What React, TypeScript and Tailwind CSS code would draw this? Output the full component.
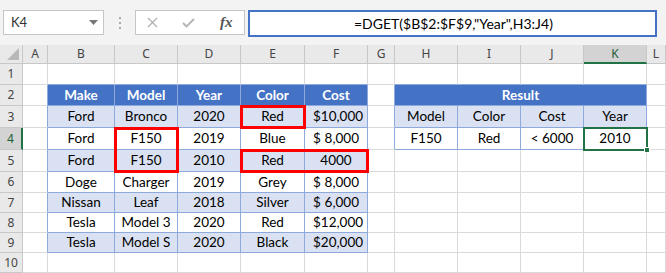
import React from 'react'

const COLS = ['A', 'B', 'C', 'D', 'E', 'F', 'G', 'H', 'I', 'J', 'K', 'L']
const ROWS = [1, 2, 3, 4, 5, 6, 7, 8, 9, 10]

const CARS: string[][] = [
  ['Make', 'Model', 'Year', 'Color', 'Cost'],
  ['Ford', 'Bronco', '2020', 'Red', '$10,000'],
  ['Ford', 'F150', '2019', 'Blue', '$ 8,000'],
  ['Ford', 'F150', '2010', 'Red', '4000'],
  ['Doge', 'Charger', '2019', 'Grey', '$ 8,000'],
  ['Nissan', 'Leaf', '2018', 'Silver', '$ 6,000'],
  ['Tesla', 'Model 3', '2020', 'Red', '$12,000'],
  ['Tesla', 'Model S', '2020', 'Black', '$20,000'],
]

const RESULT: string[][] = [
  ['Model', 'Color', 'Cost', 'Year'],
  ['F150', 'Red', '< 6000', '2010'],
]

const GRID =
  'grid grid-cols-[23px_25px_67px_63px_63px_64px_63px_27px_63px_63px_63px_63px_1fr] grid-rows-[19px_21px_21px_22px_22px_22px_21px_20px_20px_20px_20px]'

// c: 1 = A ... 12 = L
function inCars(r: number, c: number) {
  return r >= 2 && r <= 9 && c >= 2 && c <= 6
}
function inResult(r: number, c: number) {
  return r >= 2 && r <= 4 && c >= 8 && c <= 11
}
function inTable(r: number, c: number) {
  return inCars(r, c) || inResult(r, c)
}

function Cost({ value }: { value: string }) {
  if (!value.startsWith('$')) return <span>{value}</span>
  return (
    <span className="flex w-full justify-between px-[8px]">
      <span>$</span>
      <span>{value.slice(1).trim()}</span>
    </span>
  )
}

function Cell({ r, c }: { r: number; c: number }) {
  const right = inTable(r, c) || inTable(r, c + 1) ? 'border-[#8ea9db]' : 'border-[#dadada]'
  const bottom = inTable(r, c) || inTable(r + 1, c) ? 'border-b-[#8ea9db]' : 'border-b-[#dadada]'
  let bg = 'bg-white'
  let text: React.ReactNode = null
  let weight = ''

  if (inCars(r, c)) {
    const v = CARS[r - 2][c - 2]
    if (r === 2) {
      bg = 'bg-[#4472c4] text-white'
      weight = 'font-bold'
    } else if (r % 2 === 1) {
      bg = 'bg-[#d9e1f2]'
    }
    text = c === 6 && r > 2 ? <Cost value={v} /> : v
  } else if (inResult(r, c)) {
    text = RESULT[r - 3][c - 8]
    if (r === 3) bg = 'bg-[#d9e1f2]'
  }

  return (
    <div className={`flex items-center justify-center border-r border-b ${right} ${bottom} ${bg} ${weight} text-black`}>
      {text}
    </div>
  )
}

function FormulaBar() {
  return (
    <div className="flex h-[45px] items-start bg-[#f3f3f3] pt-[10px] pl-[3px]">
      <div className="flex h-[25px] w-[101px] items-center justify-between border border-[#c6c6c6] bg-white pl-[7px] pr-[5px] text-[13px] text-[#333]">
        <span>K4</span>
        <svg width="9" height="6" viewBox="0 0 9 6">
          <path d="M0 0 L9 0 L4.5 5 Z" fill="#777" />
        </svg>
      </div>
      <div className="flex h-[25px] w-[31px] flex-col items-center justify-center gap-[3px]">
        <span className="h-[2px] w-[2px] bg-[#aaa]" />
        <span className="h-[2px] w-[2px] bg-[#aaa]" />
        <span className="h-[2px] w-[2px] bg-[#aaa]" />
      </div>
      <div className="flex h-[25px] w-[110px] items-center border border-[#c6c6c6] bg-white">
        <svg className="ml-[11px]" width="11" height="11" viewBox="0 0 11 11">
          <path d="M1 1 L10 10 M10 1 L1 10" stroke="#b3b3b3" strokeWidth="1.4" fill="none" />
        </svg>
        <svg className="ml-[24px]" width="13" height="10" viewBox="0 0 13 10">
          <path d="M1 5 L4.5 8.5 L12 1" stroke="#b3b3b3" strokeWidth="1.8" fill="none" />
        </svg>
        <span className="ml-[25px] font-['Liberation_Serif',serif] text-[15px] font-bold italic leading-none text-[#555]">
          fx
        </span>
      </div>
      <div className="ml-[3px] flex h-[27px] w-[409px] items-center border-2 border-[#4472c4] bg-white pl-[104px] text-[14px] text-black">
        =DGET($B$2:$F$9,"Year",H3:J4)
      </div>
    </div>
  )
}

export default function App() {
  return (
    <div className="h-[273px] w-[666px] overflow-hidden bg-white font-['Lato',sans-serif] text-[13.5px]">
      <FormulaBar />
      <div className="relative">
        <div className={GRID}>
          {/* column headers */}
          <div className="relative border-r border-b border-[#c8c8c8] bg-[#e9e9e9]">
            <svg className="absolute right-[3px] bottom-[3px]" width="12" height="12" viewBox="0 0 12 12">
              <path d="M12 0 L12 12 L0 12 Z" fill="#b8b8b8" />
            </svg>
          </div>
          {COLS.map((col) =>
            col === 'K' ? (
              <div
                key={col}
                className="flex items-center justify-center border-r border-[#c8c8c8] border-b-2 border-b-[#217346] bg-[#d3d3d3] font-['Noto_Sans',sans-serif] text-[12px] text-[#1f5d3a]"
              >
                {col}
              </div>
            ) : (
              <div
                key={col}
                className="flex items-center justify-center border-r border-b border-[#c8c8c8] bg-[#e9e9e9] font-['Noto_Sans',sans-serif] text-[12px] text-[#444]"
              >
                {col}
              </div>
            )
          )}

          {ROWS.map((r) => (
            <React.Fragment key={r}>
              {r === 4 ? (
                <div className="flex items-center justify-center border-r-2 border-b border-r-[#217346] border-b-[#c8c8c8] bg-[#d3d3d3] font-['Noto_Sans',sans-serif] text-[12px] text-[#1f5d3a]">
                  {r}
                </div>
              ) : (
                <div className="flex items-center justify-center border-r border-b border-[#c8c8c8] bg-[#e9e9e9] font-['Noto_Sans',sans-serif] text-[12px] text-[#444]">
                  {r}
                </div>
              )}
              {COLS.map((_, i) => {
                const c = i + 1
                if (r === 2 && c === 8) {
                  return (
                    <div
                      key={c}
                      className="col-span-4 flex items-center justify-center border-r border-b border-[#8ea9db] bg-[#4472c4] font-bold text-white"
                    >
                      Result
                    </div>
                  )
                }
                if (r === 2 && c > 8 && c <= 11) return null
                return <Cell key={c} r={r} c={c} />
              })}
            </React.Fragment>
          ))}
        </div>

        {/* highlights drawn over the sheet */}
        <div className={`pointer-events-none absolute inset-0 ${GRID}`}>
          <div className="col-start-6 row-start-4 -m-px border-[3px] border-[#ff0000]" />
          <div className="col-start-4 row-start-5 row-span-2 -m-px border-[3px] border-[#ff0000]" />
          <div className="col-start-6 col-span-2 row-start-6 -m-px border-[3px] border-[#ff0000]" />
          <div className="relative col-start-12 row-start-5 -m-px border-2 border-[#217346]">
            <span className="absolute -right-[4px] -bottom-[4px] h-[6px] w-[6px] border border-white bg-[#217346]" />
          </div>
        </div>
      </div>
    </div>
  )
}
